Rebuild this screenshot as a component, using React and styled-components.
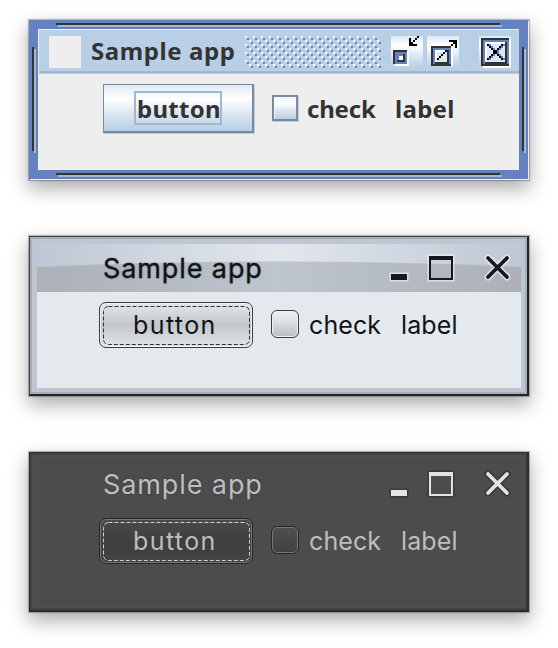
import React from "react";
import styled, { createGlobalStyle, css } from "styled-components";

const Global = createGlobalStyle`
  * { box-sizing: border-box; }
  body { margin: 0; background: #fff; }
`;

const Desktop = styled.main`
  width: 558px;
  height: 648px;
  padding: 20px 29px 0;
  display: flex;
  flex-direction: column;
  gap: 56px;
  overflow: hidden;
`;

const shadow = "0 0 1px 1px rgba(0, 0, 0, 0.24), 0 8px 18px 1px rgba(0, 0, 0, 0.32)";

const windowBase = css`
  width: 500px;
  height: 160px;
  flex: none;
  display: flex;
  flex-direction: column;
  box-shadow: ${shadow};
`;

const bar = (color, x, y, w, h) =>
  `linear-gradient(${color}, ${color}) ${x}px ${y}px / ${w}px ${h}px no-repeat`;

const MetalWindow = styled.section`
  ${windowBase}
  padding: 9px 10px 10px 9px;
  font: bold 24px/32px "Noto Sans", "Open Sans", sans-serif;
  color: #333;
  background: ${[
    bar("#333", 27, 3, 444, 2),
    bar("#a3b8cc", 29, 5, 444, 2),
    bar("#333", 27, 153, 444, 2),
    bar("#a3b8cc", 29, 155, 444, 2),
    bar("#333", 3, 27, 2, 104),
    bar("#a3b8cc", 5, 29, 2, 104),
    bar("#333", 493, 27, 2, 104),
    bar("#a3b8cc", 495, 29, 2, 104),
    bar("#eee", 1, 159, 499, 1),
    bar("#eee", 499, 1, 1, 159),
  ].join(",")}, #6382bf;
`;

const MetalBody = styled.div`
  flex: 1;
  border: solid #eee;
  border-width: 1px 0 0 1px;
  background: #eee;
`;

const MetalTitle = styled.header`
  height: 44px;
  display: flex;
  align-items: flex-start;
  padding: 6px 8px 0 10px;
  background: ${bar("#a3b8cc", 0, 41, 480, 2)}, #b8cfe5;
`;

const AppIcon = styled.div`
  width: 32px;
  height: 32px;
  background: #eee;
`;

const Caption = styled.h1`
  margin: ${(p) => p.$margin};
  width: ${(p) => p.$width}px;
  font: inherit;
  letter-spacing: ${(p) => p.$tracking}px;
  white-space: nowrap;
`;

const Bumps = styled.svg`
  width: 136px;
  height: 32px;
  margin-right: 10px;
`;

const PixelIcon = styled.svg`
  width: 32px;
  height: 32px;
  margin-left: ${(p) => p.$gap || 0}px;
  background: linear-gradient(#dde8f3, #fff 30%, #dde8f3 60%, #b8cfe5);
`;

const Row = styled.div`
  display: flex;
  align-items: flex-start;
  padding: ${(p) => p.$padding};
`;

const MetalButton = styled.button`
  width: 151px;
  height: 49px;
  padding: 6px 0 0 30px;
  display: flex;
  align-items: flex-start;
  border: solid #7a8a99;
  border-width: 1px 2px 2px 1px;
  background: linear-gradient(#dde8f3, #fff 30%, #dde8f3 60%, #b8cfe5);
  box-shadow: 1px 1px #b8cfe5;
  font: inherit;
  color: inherit;
`;

const FocusText = styled.span`
  width: 88px;
  height: 34px;
  padding-left: 1px;
  border: 2px solid #a3b8cc;
  letter-spacing: ${(p) => p.$tracking}px;
  line-height: 32px;
  text-align: left;
`;

const MetalCheck = styled.span`
  width: 26px;
  height: 26px;
  margin: 11px 9px 0 18px;
  border: 2px solid #7a8a99;
  background: linear-gradient(#e8f0f7, #fff 28%, #dde8f3 60%, #b8cfe5);
  box-shadow: 1px 1px #b8cfe5, inset 1px 1px rgba(255, 255, 255, 0.7);
`;

const Text = styled.span`
  width: ${(p) => p.$width}px;
  margin-top: ${(p) => p.$top}px;
  letter-spacing: ${(p) => p.$tracking}px;
  white-space: nowrap;
`;

const light = {
  text: "#101418", halo: "rgba(240,243,246,.65)", icon: "#14181c",
  glow: "rgba(16,20,24,.3)", stroke: "0.3px",
  border: "#3c4246", edge: "#20262a", rim: "#a7afb6", frame: "#bdc6d1", body: "#e4e9ee",
  button: "linear-gradient(#e4e6e8, #d5d8da 25%, #c2c6c9 50%, #c9cdd0 60%, #e3e4e7)",
  check: "linear-gradient(#f0f0f1, #dcdee0 45%, #b9bec1)",
  line: "#3c3e42", inner: "#f0f1f4", dash: "#303338",
};

const dark = {
  text: "#bebebe", halo: "rgba(40,40,40,.5)", icon: "#e3e3e3",
  glow: "rgba(40,40,40,.5)", stroke: "0",
  border: "#2b2b2b", edge: "#2b2b2b", rim: "#434343", frame: "#4e4e4e", body: "#4c4c4c",
  button: "linear-gradient(#4b4b4b, #3d3d3d 55%, #444)",
  check: "linear-gradient(#505050, #404040)",
  line: "#272727", inner: "#777", dash: "#cfcfcf",
};

const NimbusWindow = styled.section`
  ${windowBase}
  border: solid ${(p) => p.$t.edge};
  border-width: 1px 2px 2px 1px;
  border-top-color: ${(p) => p.$t.border};
  border-left-color: ${(p) => p.$t.border};
  padding: 7px 6px 6px 7px;
  background: ${(p) => p.$t.frame};
  box-shadow: inset 0 0 0 2px ${(p) => p.$t.rim}, ${shadow};
  color: ${(p) => p.$t.text};
  font: 25px/32px Inter, sans-serif;
`;

const NimbusBody = styled.div`
  flex: 1;
  background: ${(p) => p.$t.body};
`;

const NimbusTitle = styled.header`
  height: 48px;
  display: grid;
  grid-template-columns: 100%;
  font-size: 27px;
  & > * { grid-area: 1 / 1; }
`;

const TitleRow = styled.div`
  display: flex;
  align-items: flex-start;
  padding: 8px 0 0 66px;
  text-shadow: 0 0 2px ${(p) => p.$t.glow};
  -webkit-text-stroke: ${(p) => p.$t.stroke} ${(p) => p.$t.text};
`;

const WindowIcons = styled.svg`
  width: 126px;
  height: 30px;
`;

const NimbusButton = styled.button`
  width: 154px;
  height: 46px;
  padding: 2px;
  border: 1px solid ${(p) => p.$t.line};
  border-radius: 7px;
  background: ${(p) => p.$t.button};
  box-shadow: inset 0 0 0 1px ${(p) => p.$t.inner};
  font: inherit;
  color: inherit;
  display: grid;
  & > * { grid-area: 1 / 1; }
`;

const FocusRing = styled.svg`
  width: 148px;
  height: 40px;
`;

const NimbusCheck = styled.span`
  width: 28px;
  height: 28px;
  margin: 8px 10px 0 18px;
  border: 1px solid ${(p) => p.$t.line};
  border-radius: 6px;
  background: ${(p) => p.$t.check};
  box-shadow: inset 0 0 0 1px ${(p) => p.$t.inner};
`;

const ButtonText = styled.span`
  text-align: left;
  padding: 4px 0 0 31px;
  letter-spacing: ${(p) => p.$tracking}px;
`;

const CROSS = [4, 5, 6, 7, 8, 9, 10, 11];

function Ocean() {
  return (
    <MetalWindow>
      <MetalBody>
        <MetalTitle>
          <AppIcon />
          <Caption $margin="-1px 0 0 10px" $width={154} $tracking={0.6}>Sample app</Caption>
          <Bumps shapeRendering="crispEdges">
            <defs>
              <pattern id="bumps" width="8" height="8" patternUnits="userSpaceOnUse">
                <path fill="#fff" d="M0 0h2v2H0zM4 4h2v2H4z" />
                <path fill="#6382bf" d="M2 2h2v2H2zM6 6h2v2H6z" />
              </pattern>
            </defs>
            <rect width="136" height="32" fill="url(#bumps)" />
          </Bumps>
          <PixelIcon viewBox="0 0 16 16" shapeRendering="crispEdges">
            <path fill="#fff" d="M2 8h7v7H2z" />
            <path fill="#333" d="M1 7h7v7H1z" />
            <path fill="#6382bf" d="M2 8h6v6H2z" />
            <path fill="#333" d="M3 9h4v4H3z" />
            <path fill="#6382bf" d="M3 9h3v1H4v2H3z" />
            <path fill="#fff" d="M4 10h2v2H4z" />
            <path fill="#000" d="M9 1h1v3h3v1H9zM10 3h1v1h-1zM11 2h1v1h-1zM12 1h1v1h-1zM13 0h1v1h-1z" />
          </PixelIcon>
          <PixelIcon $gap={4} viewBox="0 0 16 16" shapeRendering="crispEdges">
            <path fill="#fff" d="M3 15h10V6h-1v8H3z" />
            <path fill="#333" d="M2 5h10v10H2z" />
            <path fill="#6382bf" d="M3 6h9v8H3z" />
            <path fill="#333" d="M4 7h7v7H4z" />
            <path fill="#fff" d="M4 7h6v6H4z" />
            <path fill="#dde8f3" d="M5 8h5v5H5z" />
            <path fill="#000" d="M5 11h1v1H5zM6 10h1v1H6zM7 9h1v1H7zM8 8h1v1H8zM9 7h1v1H9zM12 4h1v1h-1zM13 3h1v1h-1zM11 2h4v4h-1V3h-3z" />
          </PixelIcon>
          <PixelIcon $gap={20} viewBox="0 0 16 16" shapeRendering="crispEdges">
            <path fill="#fff" d="M2 2h14v14H2z" />
            <path fill="#333" d="M1 1h14v14H1z" />
            <path fill="#6382bf" d="M2 2h13v12H2z" />
            <path fill="#333" d="M3 3h11v11H3z" />
            <path fill="#fff" d="M3 3h10v10H3z" />
            <path fill="#dde8f3" d="M4 4h9v9H4z" />
            {CROSS.map((n) => (
              <path key={`s${n}`} fill="#6382bf" d={`M${n + 1} ${n}h1v1h-1zM${16 - n} ${n}h1v1h-1z`} />
            ))}
            {CROSS.map((n) => (
              <path key={`x${n}`} fill="#000" d={`M${n} ${n}h1v1h-1zM${15 - n} ${n}h1v1h-1z`} />
            ))}
          </PixelIcon>
        </MetalTitle>
        <Row $padding="10px 0 0 64px">
          <MetalButton><FocusText $tracking={0.3}>button</FocusText></MetalButton>
          <MetalCheck />
          <Text $width={88} $top={9} $tracking={-0.2}>check</Text>
          <Text $width={70} $top={9} $tracking={0.3}>label</Text>
        </Row>
      </MetalBody>
    </MetalWindow>
  );
}

function Nimbus({ theme, glass }) {
  return (
    <NimbusWindow $t={theme}>
      <NimbusBody $t={theme}>
        <NimbusTitle>
          {glass && (
            <svg width="484" height="48">
              <defs>
                <linearGradient id="sky">
                  <stop offset="0" stopColor="#bec7d3" />
                  <stop offset=".5" stopColor="#e3e7ec" />
                  <stop offset="1" stopColor="#bec7d3" />
                </linearGradient>
                <linearGradient id="ground">
                  <stop offset="0" stopColor="#adb0b7" />
                  <stop offset=".5" stopColor="#bdc5cf" />
                  <stop offset="1" stopColor="#adb0b7" />
                </linearGradient>
              </defs>
              <path d="M0 0h484v48H0z" fill="url(#sky)" />
              <path d="M0 23Q242 12 484 23V48H0z" fill="url(#ground)" />
            </svg>
          )}
          <TitleRow $t={theme}>
            <Caption $margin="1px 0 0" $width={284} $tracking={0.9}>Sample app</Caption>
            <WindowIcons>
              <g stroke={theme.halo} strokeWidth="3" fill="none">
                <path d="M4 22h16v6H4zM42 4h24v24H42z" />
                <path d="M101 6l19 19M120 6l-19 19" strokeWidth="7" strokeLinecap="round" />
              </g>
              <path d="M4 22h16v6H4z" fill={theme.icon} />
              <path fillRule="evenodd" fill={theme.icon} d="M42 4h24v24H42zM44 8h20v18H44z" />
              <path d="M101 6l19 19M120 6l-19 19" stroke={theme.icon} strokeWidth="3.8" strokeLinecap="round" />
            </WindowIcons>
          </TitleRow>
        </NimbusTitle>
        <Row $padding="10px 0 0 62px">
          <NimbusButton $t={theme}>
            <FocusRing>
              <rect x="1.5" y="1.5" width="146" height="38" rx="5" fill="none" stroke={theme.dash} strokeDasharray="4 2" />
            </FocusRing>
            <ButtonText $tracking={1.4}>button</ButtonText>
          </NimbusButton>
          <NimbusCheck $t={theme} />
          <Text $width={92} $top={7} $tracking={0.1}>check</Text>
          <Text $width={70} $top={7} $tracking={0.1}>label</Text>
        </Row>
      </NimbusBody>
    </NimbusWindow>
  );
}

export default function App() {
  return (
    <>
      <Global />
      <Desktop>
        <Ocean />
        <Nimbus theme={light} glass />
        <Nimbus theme={dark} />
      </Desktop>
    </>
  );
}
